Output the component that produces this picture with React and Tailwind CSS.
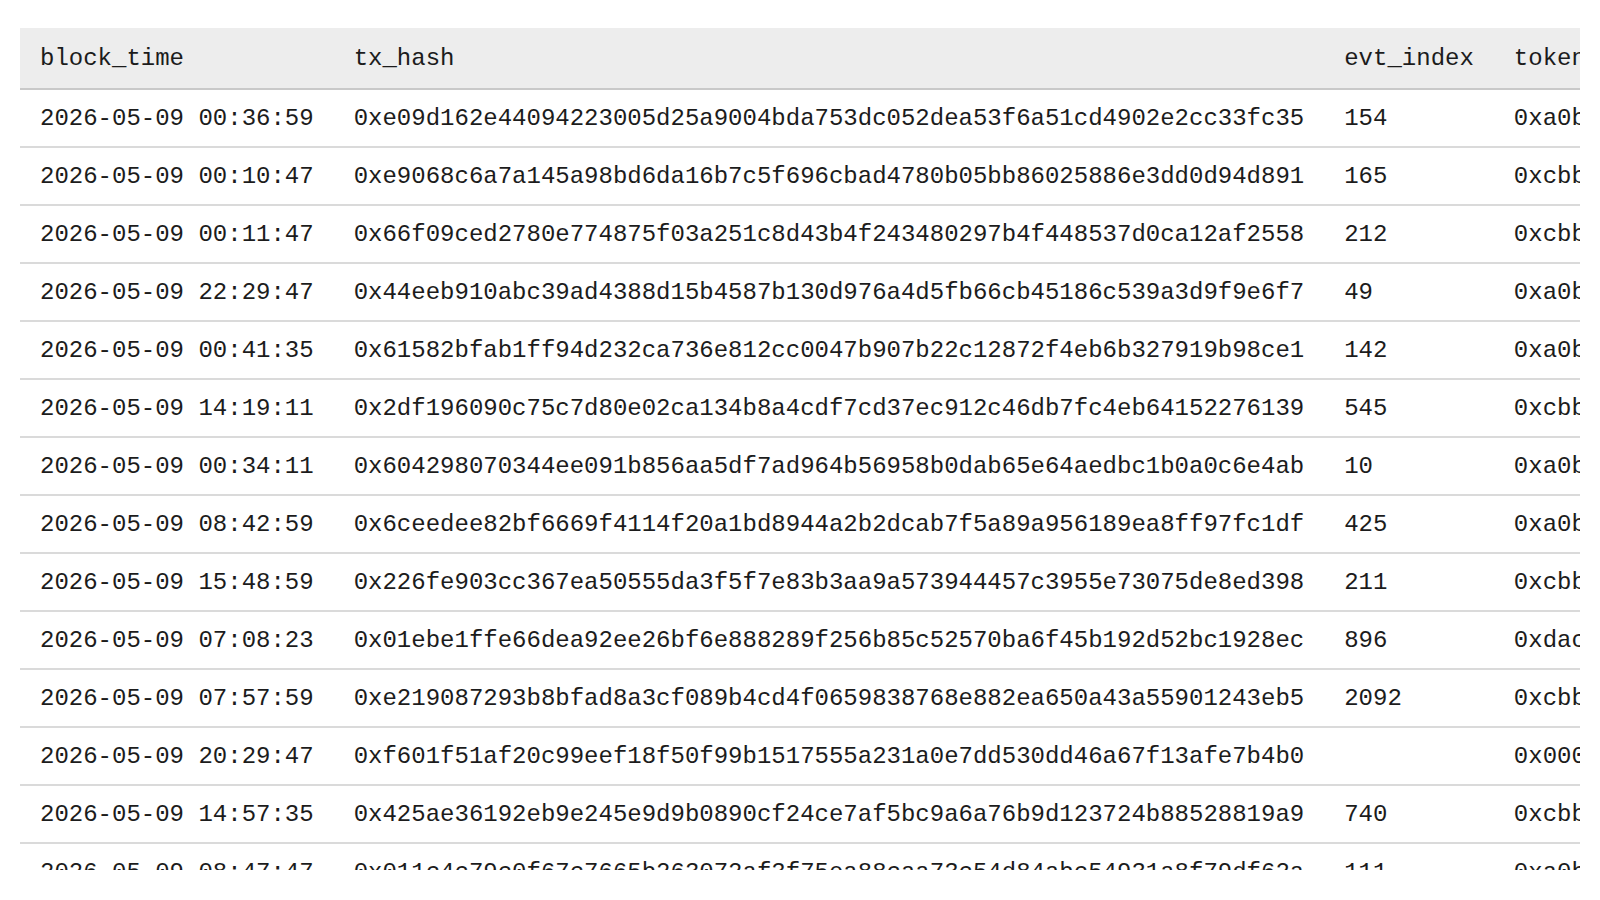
const USDC = '0xa0b86991c6218b36c1d19d4a2e9eb0ce3606eb48'
const CBBTC = '0xcbb7c0000ab88b473b1f5afd9ef808440eed33bf'
const USDT = '0xdac17f958d2ee523a2206206994597c13d831ec7'
const ZERO = '0x0000000000000000000000000000000000000000'

const rows = [
  ['2026-05-09 00:36:59', '0xe09d162e44094223005d25a9004bda753dc052dea53f6a51cd4902e2cc33fc35', '154', USDC],
  ['2026-05-09 00:10:47', '0xe9068c6a7a145a98bd6da16b7c5f696cbad4780b05bb86025886e3dd0d94d891', '165', CBBTC],
  ['2026-05-09 00:11:47', '0x66f09ced2780e774875f03a251c8d43b4f243480297b4f448537d0ca12af2558', '212', CBBTC],
  ['2026-05-09 22:29:47', '0x44eeb910abc39ad4388d15b4587b130d976a4d5fb66cb45186c539a3d9f9e6f7', '49', USDC],
  ['2026-05-09 00:41:35', '0x61582bfab1ff94d232ca736e812cc0047b907b22c12872f4eb6b327919b98ce1', '142', USDC],
  ['2026-05-09 14:19:11', '0x2df196090c75c7d80e02ca134b8a4cdf7cd37ec912c46db7fc4eb64152276139', '545', CBBTC],
  ['2026-05-09 00:34:11', '0x604298070344ee091b856aa5df7ad964b56958b0dab65e64aedbc1b0a0c6e4ab', '10', USDC],
  ['2026-05-09 08:42:59', '0x6ceedee82bf6669f4114f20a1bd8944a2b2dcab7f5a89a956189ea8ff97fc1df', '425', USDC],
  ['2026-05-09 15:48:59', '0x226fe903cc367ea50555da3f5f7e83b3aa9a573944457c3955e73075de8ed398', '211', CBBTC],
  ['2026-05-09 07:08:23', '0x01ebe1ffe66dea92ee26bf6e888289f256b85c52570ba6f45b192d52bc1928ec', '896', USDT],
  ['2026-05-09 07:57:59', '0xe219087293b8bfad8a3cf089b4cd4f0659838768e882ea650a43a55901243eb5', '2092', CBBTC],
  ['2026-05-09 20:29:47', '0xf601f51af20c99eef18f50f99b1517555a231a0e7dd530dd46a67f13afe7b4b0', '', ZERO],
  ['2026-05-09 14:57:35', '0x425ae36192eb9e245e9d9b0890cf24ce7af5bc9a6a76b9d123724b88528819a9', '740', CBBTC],
  ['2026-05-09 08:47:47', '0x011c4c79c0f67c7665b263072af3f75ea88caa73c54d84abc54931a8f79df62a', '111', USDC],
]

const cols = ['block_time', 'tx_hash', 'evt_index', 'token_address']

export default function App() {
  return (
    <div className="bg-white px-5 pt-[28px] text-[#1c1c1c]" style={{ fontFamily: '"Liberation Mono", monospace' }}>
      <div className="h-[842px] overflow-hidden">
        <table className="border-separate border-spacing-0 whitespace-nowrap text-left text-[24px]">
          <thead>
            <tr className="bg-[#ededed]">
              {cols.map(c => (
                <th key={c} className="border-b-2 border-[#c9c9c9] px-5 pt-[2px] pb-0 font-normal leading-[58px]">{c}</th>
              ))}
            </tr>
          </thead>
          <tbody>
            {rows.map(r => (
              <tr key={r[1]}>
                {r.map((v, i) => (
                  <td key={i} className="border-b-2 border-[#dadada] px-5 pt-[1px] pb-0 leading-[55px]">{v}</td>
                ))}
              </tr>
            ))}
          </tbody>
        </table>
      </div>
    </div>
  )
}
